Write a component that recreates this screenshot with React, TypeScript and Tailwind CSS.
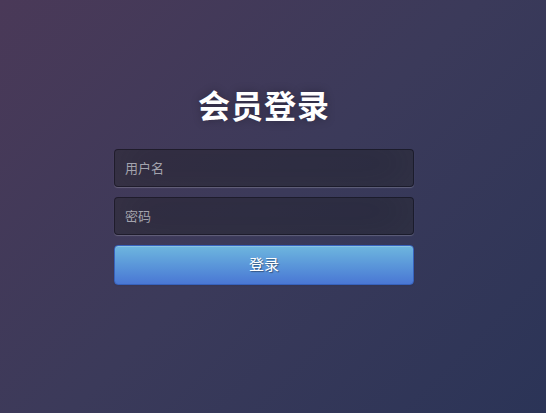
export default function App() {
  return (
    <div
      className="w-full h-[413px] overflow-hidden bg-[#2c3457] bg-linear-135 from-[#4a3958] via-[#3b3a5a] to-[#2b3457] flex justify-center pr-[18px]"
      style={{ fontFamily: '"Liberation Sans", "Noto Sans CJK SC", sans-serif' }}
    >
      <div className="w-[300px] pt-[87px]">
        <h1 className="text-center text-[32px] leading-[40px] font-bold text-white tracking-[1px] [text-shadow:0_0_10px_rgba(0,0,0,0.3)]">
          会员登录
        </h1>
        <form className="mt-[22px] flex flex-col" onSubmit={(e) => e.preventDefault()}>
          <input
            type="text"
            placeholder="用户名"
            className="w-full h-[38px] mb-[10px] px-[10px] text-[13px] text-white placeholder:text-[#a3a3ad] bg-black/30 border border-black/30 rounded-[4px] outline-none shadow-[inset_0_-5px_45px_rgba(100,100,100,0.2),0_1px_1px_rgba(255,255,255,0.2)]"
          />
          <input
            type="password"
            placeholder="密码"
            className="w-full h-[38px] mb-[10px] px-[10px] text-[13px] text-white placeholder:text-[#a3a3ad] bg-black/30 border border-black/30 rounded-[4px] outline-none shadow-[inset_0_-5px_45px_rgba(100,100,100,0.2),0_1px_1px_rgba(255,255,255,0.2)]"
          />
          <button
            type="submit"
            className="w-full h-[40px] text-[15px] text-white rounded-[4px] border border-[#3762bc] bg-linear-to-b from-[#6eb6de] to-[#4a77d4] [text-shadow:1px_1px_1px_rgba(0,0,0,0.4)] shadow-[inset_0_1px_0_rgba(255,255,255,0.2),0_1px_2px_rgba(0,0,0,0.05)]"
          >
            登录
          </button>
        </form>
      </div>
    </div>
  )
}
